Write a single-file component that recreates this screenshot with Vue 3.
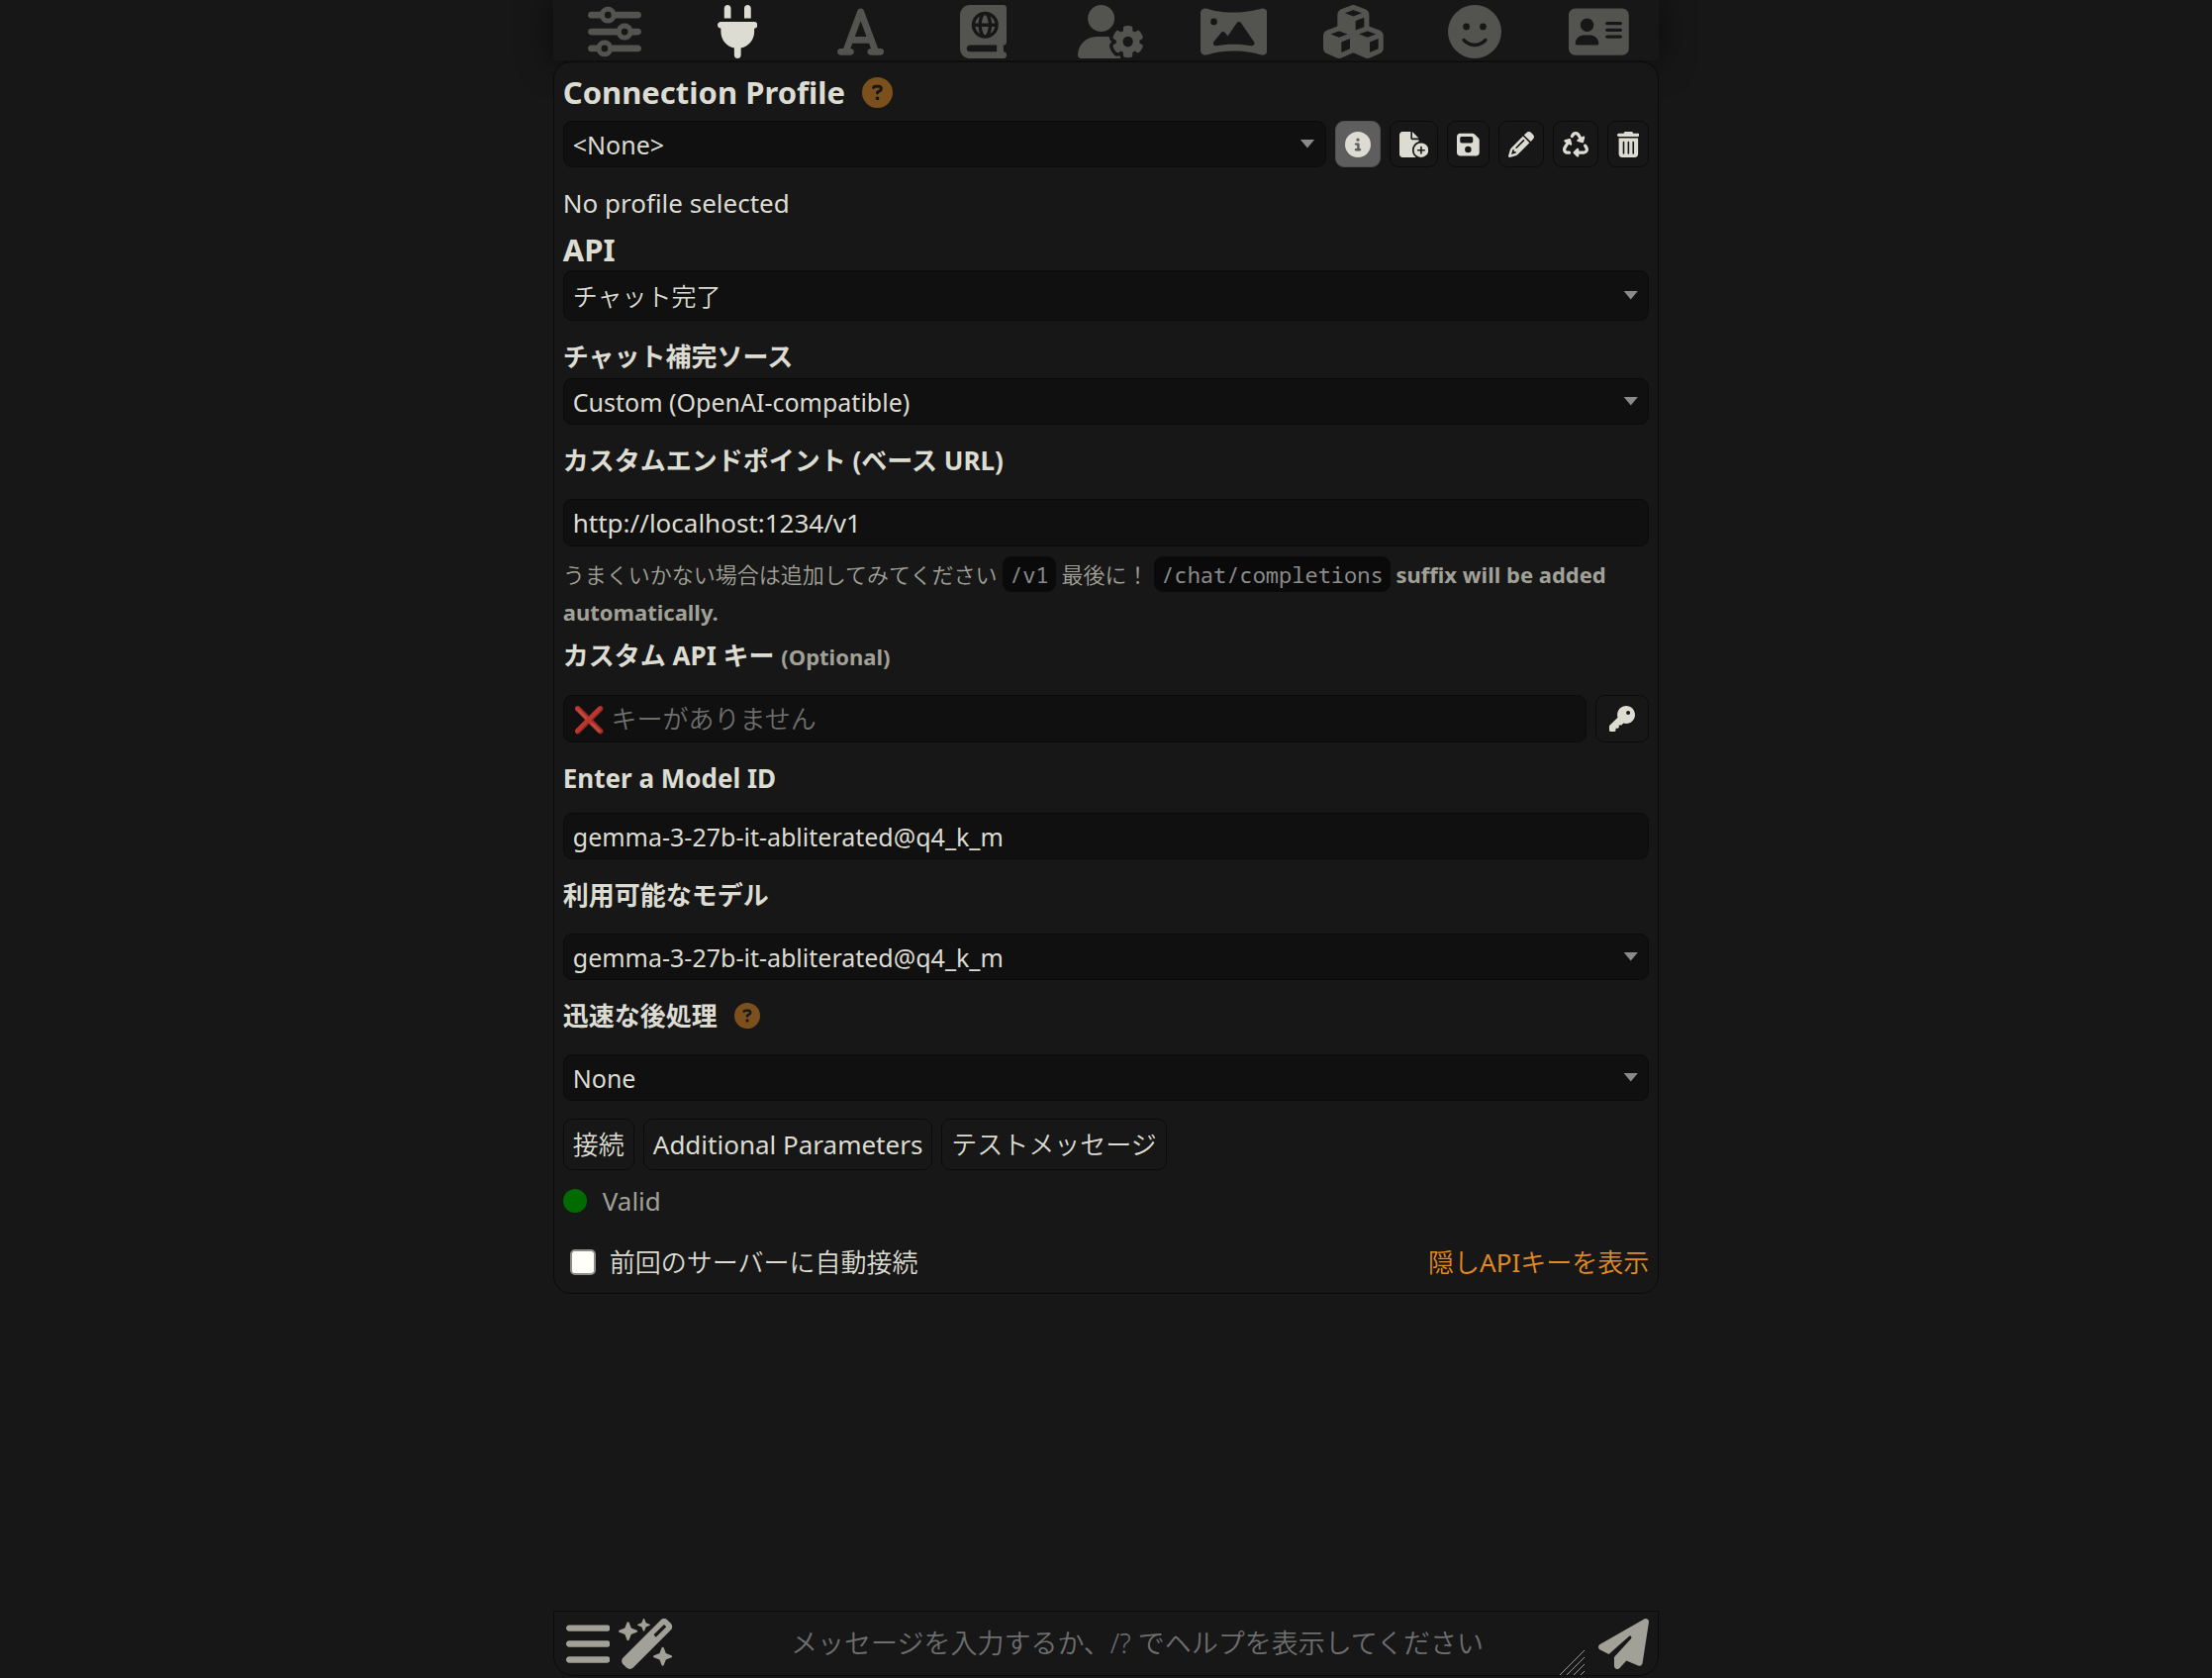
<script setup>
import { ref } from 'vue'

const icons = {
  sliders: [512, 'M0 416c0 17.7 14.3 32 32 32l54.7 0c12.3 28.3 40.5 48 73.3 48s61-19.7 73.3-48L480 448c17.7 0 32-14.3 32-32s-14.3-32-32-32l-246.7 0c-12.3-28.3-40.5-48-73.3-48s-61 19.7-73.3 48L32 384c-17.7 0-32 14.3-32 32zm128 0a32 32 0 1 1 64 0 32 32 0 1 1 -64 0zM320 256a32 32 0 1 1 64 0 32 32 0 1 1 -64 0zm32-80c-32.8 0-61 19.7-73.3 48L32 224c-17.7 0-32 14.3-32 32s14.3 32 32 32l246.7 0c12.3 28.3 40.5 48 73.3 48s61-19.7 73.3-48l54.7 0c17.7 0 32-14.3 32-32s-14.3-32-32-32l-54.7 0c-12.3-28.3-40.5-48-73.3-48zM192 128a32 32 0 1 1 0-64 32 32 0 1 1 0 64zm73.3-64C253 35.7 224.8 16 192 16s-61 19.7-73.3 48L32 64C14.3 64 0 78.3 0 96s14.3 32 32 32l86.7 0c12.3 28.3 40.5 48 73.3 48s61-19.7 73.3-48L480 128c17.7 0 32-14.3 32-32s-14.3-32-32-32L265.3 64z'],
  plug: [384, 'M96 0C78.3 0 64 14.3 64 32l0 96 64 0 0-96c0-17.7-14.3-32-32-32zM288 0c-17.7 0-32 14.3-32 32l0 96 64 0 0-96c0-17.7-14.3-32-32-32zM32 160c-17.7 0-32 14.3-32 32s14.3 32 32 32l0 32c0 77.4 55 142 128 156.8l0 67.2c0 17.7 14.3 32 32 32s32-14.3 32-32l0-67.2C297 398 352 333.4 352 256l0-32c17.7 0 32-14.3 32-32s-14.3-32-32-32L32 160z'],
  font: [448, 'M254 52.8C249.3 40.3 237.3 32 224 32s-25.3 8.3-30 20.8L57.8 416 32 416c-17.7 0-32 14.3-32 32s14.3 32 32 32l96 0c17.7 0 32-14.3 32-32s-14.3-32-32-32l-1.8 0 18-48 159.6 0 18 48-1.8 0c-17.7 0-32 14.3-32 32s14.3 32 32 32l96 0c17.7 0 32-14.3 32-32s-14.3-32-32-32l-25.8 0L254 52.8zM279.8 304l-111.6 0L224 155.1 279.8 304z'],
  atlas: [448, 'M0 96C0 43 43 0 96 0L384 0l32 0c17.7 0 32 14.3 32 32l0 320c0 17.7-14.3 32-32 32l0 64c17.7 0 32 14.3 32 32s-14.3 32-32 32l-32 0L96 512c-53 0-96-43-96-96L0 96zM64 416c0 17.7 14.3 32 32 32l256 0 0-64L96 384c-17.7 0-32 14.3-32 32zM247.4 283.8c-3.7 3.7-6.2 4.2-7.4 4.2s-3.7-.5-7.4-4.2c-3.8-3.7-8-10-11.8-18.9c-6.2-14.5-10.8-34.3-12.2-56.9l63 0c-1.5 22.6-6 42.4-12.2 56.9c-3.8 8.9-8 15.2-11.8 18.9zm42.7-9.9c7.3-18.3 12-41.1 13.4-65.9l31.1 0c-4.7 27.9-21.4 51.7-44.5 65.9zm0-163.8c23.2 14.2 39.9 38 44.5 65.9l-31.1 0c-1.4-24.7-6.1-47.5-13.4-65.9zM368 192a128 128 0 1 0 -256 0 128 128 0 1 0 256 0zM145.3 208l31.1 0c1.4 24.7 6.1 47.5 13.4 65.9c-23.2-14.2-39.9-38-44.5-65.9zm31.1-32l-31.1 0c4.7-27.9 21.4-51.7 44.5-65.9c-7.3 18.3-12 41.1-13.4 65.9zm56.1-75.8c3.7-3.7 6.2-4.2 7.4-4.2s3.7 .5 7.4 4.2c3.8 3.7 8 10 11.8 18.9c6.2 14.5 10.8 34.3 12.2 56.9l-63 0c1.5-22.6 6-42.4 12.2-56.9c3.8-8.9 8-15.2 11.8-18.9z'],
  userGear: [640, 'M224 0a128 128 0 1 1 0 256A128 128 0 1 1 224 0zM178.3 304l91.4 0c11.8 0 23.4 1.2 34.5 3.3c-2.1 18.5 7.4 35.6 21.8 44.8c-16.6 10.6-26.7 31.6-20 53.3c4 12.9 9.4 25.5 16.4 37.6s15.2 23.1 24.4 33c15.7 16.9 39.6 18.4 57.2 8.7l0 .9c0 9.2 2.7 18.5 7.9 26.3L29.7 512C13.3 512 0 498.7 0 482.3C0 383.8 79.8 304 178.3 304zM436 218.2c0-7 4.5-13.3 11.3-14.8c10.5-2.4 21.5-3.7 32.7-3.7s22.2 1.3 32.7 3.7c6.8 1.5 11.3 7.8 11.3 14.8l0 30.6c7.9 3.4 15.4 7.7 22.3 12.8l24.9-14.3c6.1-3.5 13.7-2.7 18.5 2.4c7.6 8.1 14.3 17.2 20.1 27.2s10.3 20.4 13.5 31c2.1 6.7-1.1 13.7-7.2 17.2l-25 14.4c.4 4 .7 8.1 .7 12.3s-.2 8.2-.7 12.3l25 14.4c6.1 3.5 9.2 10.5 7.2 17.2c-3.3 10.6-7.8 21-13.5 31s-12.5 19.1-20.1 27.2c-4.8 5.1-12.5 5.9-18.5 2.4l-24.9-14.3c-6.9 5.1-14.3 9.4-22.3 12.8l0 30.6c0 7-4.5 13.3-11.3 14.8c-10.5 2.4-21.5 3.7-32.7 3.7s-22.2-1.3-32.7-3.7c-6.8-1.5-11.3-7.8-11.3-14.8l0-30.5c-8-3.4-15.6-7.7-22.5-12.9l-24.7 14.3c-6.1 3.5-13.7 2.7-18.5-2.4c-7.6-8.1-14.3-17.2-20.1-27.2s-10.3-20.4-13.5-31c-2.1-6.7 1.1-13.7 7.2-17.2l24.8-14.3c-.4-4.1-.7-8.2-.7-12.4s.2-8.3 .7-12.4L343.8 325c-6.1-3.5-9.2-10.5-7.2-17.2c3.3-10.6 7.7-21 13.5-31s12.5-19.1 20.1-27.2c4.8-5.1 12.4-5.9 18.5-2.4l24.8 14.3c6.9-5.1 14.5-9.4 22.5-12.9l0-30.5zm92.1 133.5a48.1 48.1 0 1 0 -96.1 0 48.1 48.1 0 1 0 96.1 0z'],
  panorama: [640, 'M45.6 32C20.4 32 0 52.4 0 77.6L0 434.4C0 459.6 20.4 480 45.6 480c5.1 0 10-.8 14.7-2.4C74.6 472.8 177.6 440 320 440s245.4 32.8 259.6 37.6c4.7 1.6 9.7 2.4 14.7 2.4c25.2 0 45.6-20.4 45.6-45.6l0-356.7C640 52.4 619.6 32 594.4 32c-5 0-10 .8-14.7 2.4C565.4 39.2 462.4 72 320 72S74.6 39.2 60.4 34.4C55.6 32.8 50.7 32 45.6 32zM96 160a32 32 0 1 1 64 0 32 32 0 1 1 -64 0zm272 0c7.9 0 15.4 3.9 19.8 10.5L512.3 353c5.4 8 5.6 18.4 .4 26.5s-14.7 12.3-24.2 10.7C442.7 382.4 385.2 376 320 376c-65.6 0-123.4 6.5-169.3 14.4c-9.8 1.7-19.7-2.9-24.7-11.5s-4.3-19.4 1.9-27.2L197.3 265c4.6-5.7 11.4-9 18.7-9s14.2 3.3 18.7 9l26.4 33.1 87-127.6c4.5-6.6 11.9-10.5 19.8-10.5z'],
  cubes: [576, 'M290.8 48.6l78.4 29.7L288 109.5 206.8 78.3l78.4-29.7c1.8-.7 3.8-.7 5.7 0zM136 92.5l0 112.2c-1.3 .4-2.6 .8-3.9 1.3l-96 36.4C14.4 250.6 0 271.5 0 294.7L0 413.9c0 22.2 13.1 42.3 33.5 51.3l96 42.2c14.4 6.3 30.7 6.3 45.1 0L288 457.5l113.5 49.9c14.4 6.3 30.7 6.3 45.1 0l96-42.2c20.3-8.9 33.5-29.1 33.5-51.3l0-119.1c0-23.3-14.4-44.1-36.1-52.4l-96-36.4c-1.3-.5-2.6-.9-3.9-1.3l0-112.2c0-23.3-14.4-44.1-36.1-52.4l-96-36.4c-12.8-4.8-26.9-4.8-39.7 0l-96 36.4C150.4 48.4 136 69.3 136 92.5zM392 210.6l-82.4 31.2 0-89.2L392 121l0 89.6zM154.8 250.9l78.4 29.7L152 311.7 70.8 280.6l78.4-29.7c1.8-.7 3.8-.7 5.7 0zm18.8 204.4l0-100.5L256 323.2l0 95.9-82.4 36.2zM421.2 250.9c1.8-.7 3.8-.7 5.7 0l78.4 29.7L424 311.7l-81.2-31.1 78.4-29.7zM523.2 421.2l-77.6 34.1 0-100.5L528 323.2l0 90.7c0 3.2-1.9 6-4.8 7.3z'],
  smile: [512, 'M256 512A256 256 0 1 0 256 0a256 256 0 1 0 0 512zM164.1 325.5C182 346.2 212.6 368 256 368s74-21.8 91.9-42.5c5.8-6.7 15.9-7.4 22.6-1.6s7.4 15.9 1.6 22.6C349.8 372.1 311.1 400 256 400s-93.8-27.9-116.1-53.5c-5.8-6.7-5.1-16.8 1.6-22.6s16.8-5.1 22.6 1.6zM144.4 208a32 32 0 1 1 64 0 32 32 0 1 1 -64 0zm192-32a32 32 0 1 1 0 64 32 32 0 1 1 0-64z'],
  card: [576, 'M64 32C28.7 32 0 60.7 0 96L0 416c0 35.3 28.7 64 64 64l448 0c35.3 0 64-28.7 64-64l0-320c0-35.3-28.7-64-64-64L64 32zm80 256l64 0c44.2 0 80 35.8 80 80c0 8.8-7.2 16-16 16L80 384c-8.8 0-16-7.2-16-16c0-44.2 35.8-80 80-80zm-32-96a64 64 0 1 1 128 0 64 64 0 1 1 -128 0zm256-32l128 0c8.8 0 16 7.2 16 16s-7.2 16-16 16l-128 0c-8.8 0-16-7.2-16-16s7.2-16 16-16zm0 64l128 0c8.8 0 16 7.2 16 16s-7.2 16-16 16l-128 0c-8.8 0-16-7.2-16-16s7.2-16 16-16zm0 64l128 0c8.8 0 16 7.2 16 16s-7.2 16-16 16l-128 0c-8.8 0-16-7.2-16-16s7.2-16 16-16z'],
  question: [512, 'M256 512A256 256 0 1 0 256 0a256 256 0 1 0 0 512zM169.8 165.3c7.9-22.3 29.1-37.3 52.8-37.3l58.3 0c34.9 0 63.1 28.3 63.1 63.1c0 22.6-12.1 43.5-31.7 54.8L280 264.4c-.2 13-10.9 23.6-24 23.6c-13.3 0-24-10.7-24-24l0-13.5c0-8.6 4.6-16.5 12.1-20.8l44.3-25.4c4.7-2.7 7.6-7.7 7.6-13.1c0-8.4-6.8-15.1-15.1-15.1l-58.3 0c-3.4 0-6.4 2.1-7.5 5.3l-.4 1.2c-4.4 12.5-18.2 19-30.6 14.6s-19-18.2-14.6-30.6l.4-1.2zM224 352a32 32 0 1 1 64 0 32 32 0 1 1 -64 0z'],
  info: [512, 'M256 512A256 256 0 1 0 256 0a256 256 0 1 0 0 512zM216 336l24 0 0-64-24 0c-13.3 0-24-10.7-24-24s10.7-24 24-24l48 0c13.3 0 24 10.7 24 24l0 88 8 0c13.3 0 24 10.7 24 24s-10.7 24-24 24l-80 0c-13.3 0-24-10.7-24-24s10.7-24 24-24zm40-208a32 32 0 1 1 0 64 32 32 0 1 1 0-64z'],
  filePlus: [576, 'M0 64C0 28.7 28.7 0 64 0L224 0l0 128c0 17.7 14.3 32 32 32l128 0 0 38.6C310.1 219.5 256 287.4 256 368c0 59.1 29.1 111.3 73.7 143.3c-3.2 .5-6.4 .7-9.7 .7L64 512c-35.3 0-64-28.7-64-64L0 64zm384 64l-128 0L256 0 384 128zm48 96a144 144 0 1 1 0 288 144 144 0 1 1 0-288zm16 80c0-8.8-7.2-16-16-16s-16 7.2-16 16l0 48-48 0c-8.8 0-16 7.2-16 16s7.2 16 16 16l48 0 0 48c0 8.8 7.2 16 16 16s16-7.2 16-16l0-48 48 0c8.8 0 16-7.2 16-16s-7.2-16-16-16l-48 0 0-48z'],
  floppy: [448, 'M64 32C28.7 32 0 60.7 0 96L0 416c0 35.3 28.7 64 64 64l320 0c35.3 0 64-28.7 64-64l0-242.7c0-17-6.7-33.3-18.7-45.3L352 50.7C340 38.7 323.7 32 306.7 32L64 32zm0 96c0-17.7 14.3-32 32-32l192 0c17.7 0 32 14.3 32 32l0 64c0 17.7-14.3 32-32 32L96 224c-17.7 0-32-14.3-32-32l0-64zM224 288a64 64 0 1 1 0 128 64 64 0 1 1 0-128z'],
  pencil: [512, 'M410.3 231l11.3-11.3-33.9-33.9-62.1-62.1L291.7 89.8l-11.3 11.3-22.6 22.6L58.6 322.9c-10.4 10.4-18 23.3-22.2 37.4L1 480.7c-2.5 8.4-.2 17.5 6.1 23.7s15.3 8.5 23.7 6.1l120.3-35.4c14.1-4.2 27-11.8 37.4-22.2L387.7 253.7 410.3 231zM160 399.4l-9.1 22.7c-4 3.1-8.5 5.4-13.3 6.9L59.4 452l23-78.1c1.4-4.9 3.8-9.4 6.9-13.3l22.7-9.1 0 32c0 8.8 7.2 16 16 16l32 0zM362.7 18.7L348.3 33.2 325.7 55.8 314.3 67.1l33.9 33.9 62.1 62.1 33.9 33.9 11.3-11.3 22.6-22.6 14.5-14.5c25-25 25-65.5 0-90.5L453.3 18.7c-25-25-65.5-25-90.5 0zm-47.4 168l-144 144c-6.2 6.2-16.4 6.2-22.6 0s-6.2-16.4 0-22.6l144-144c6.2-6.2 16.4-6.2 22.6 0s6.2 16.4 0 22.6z'],
  recycle: [512, 'M174.7 45.1C192.2 17 223 0 256 0s63.8 17 81.3 45.1l38.6 61.7 27-15.6c8.4-4.9 18.9-4.2 26.6 1.7s11.1 15.9 8.6 25.3l-23.4 87.4c-3.4 12.8-16.6 20.4-29.4 17l-87.4-23.4c-9.4-2.5-16.3-10.4-17.6-20s3.4-19.1 11.8-23.9l28.4-16.4L283 79c-5.8-9.3-16-15-27-15s-21.2 5.7-27 15l-17.5 28c-9.2 14.8-28.6 19.5-43.6 10.5c-15.3-9.2-20.2-29.2-10.7-44.4l17.5-28zM429.5 251.9c15-9 34.4-4.3 43.6 10.5l24.4 39.1c9.4 15.1 14.4 32.4 14.6 50.2c.3 53.1-42.7 96.4-95.8 96.4L320 448l0 32c0 9.7-5.8 18.5-14.8 22.2s-19.3 1.7-26.2-5.2l-64-64c-9.4-9.4-9.4-24.6 0-33.9l64-64c6.9-6.9 17.2-8.9 26.2-5.2s14.8 12.5 14.8 22.2l0 32 96.2 0c17.6 0 31.9-14.4 31.8-32c0-5.9-1.7-11.7-4.8-16.7l-24.4-39.1c-9.5-15.2-4.7-35.2 10.7-44.4zm-364.6-31L36 204.2c-8.4-4.9-13.1-14.3-11.8-23.9s8.2-17.5 17.6-20l87.4-23.4c12.8-3.4 26 4.2 29.4 17L182 241.2c2.5 9.4-.9 19.3-8.6 25.3s-18.2 6.6-26.6 1.7l-26.5-15.3L68.8 335.3c-3.1 5-4.8 10.8-4.8 16.7c-.1 17.6 14.2 32 31.8 32l32.2 0c17.7 0 32 14.3 32 32s-14.3 32-32 32l-32.2 0C42.7 448-.3 404.8 0 351.6c.1-17.8 5.1-35.1 14.6-50.2l50.3-80.5z'],
  trash: [448, 'M135.2 17.7C140.6 6.8 151.7 0 163.8 0L284.2 0c12.1 0 23.2 6.8 28.6 17.7L320 32l96 0c17.7 0 32 14.3 32 32s-14.3 32-32 32L32 96C14.3 96 0 81.7 0 64S14.3 32 32 32l96 0 7.2-14.3zM32 128l384 0 0 320c0 35.3-28.7 64-64 64L96 512c-35.3 0-64-28.7-64-64l0-320zm96 64c-8.8 0-16 7.2-16 16l0 224c0 8.8 7.2 16 16 16s16-7.2 16-16l0-224c0-8.8-7.2-16-16-16zm96 0c-8.8 0-16 7.2-16 16l0 224c0 8.8 7.2 16 16 16s16-7.2 16-16l0-224c0-8.8-7.2-16-16-16zm96 0c-8.8 0-16 7.2-16 16l0 224c0 8.8 7.2 16 16 16s16-7.2 16-16l0-224c0-8.8-7.2-16-16-16z'],
  key: [512, 'M336 352c97.2 0 176-78.8 176-176S433.2 0 336 0S160 78.8 160 176c0 18.7 2.9 36.8 8.3 53.7L7 391c-4.5 4.5-7 10.6-7 17l0 80c0 13.3 10.7 24 24 24l80 0c13.3 0 24-10.7 24-24l0-40 40 0c13.3 0 24-10.7 24-24l0-40 40 0c6.4 0 12.5-2.5 17-7l33.3-33.3c16.9 5.4 35 8.3 53.7 8.3zM376 96a40 40 0 1 1 0 80 40 40 0 1 1 0-80z'],
  bars: [448, 'M0 96C0 78.3 14.3 64 32 64l384 0c17.7 0 32 14.3 32 32s-14.3 32-32 32L32 128C14.3 128 0 113.7 0 96zM0 256c0-17.7 14.3-32 32-32l384 0c17.7 0 32 14.3 32 32s-14.3 32-32 32L32 288c-17.7 0-32-14.3-32-32zM448 416c0 17.7-14.3 32-32 32L32 448c-17.7 0-32-14.3-32-32s14.3-32 32-32l384 0c17.7 0 32 14.3 32 32z'],
  wand: [576, 'M234.7 42.7L197 56.8c-3 1.1-5 4-5 7.2s2 6.1 5 7.2l37.7 14.1L248.8 123c1.1 3 4 5 7.2 5s6.1-2 7.2-5l14.1-37.7L315 71.2c3-1.1 5-4 5-7.2s-2-6.1-5-7.2L277.3 42.7 263.2 5c-1.1-3-4-5-7.2-5s-6.1 2-7.2 5L234.7 42.7zM46.1 395.4c-18.7 18.7-18.7 49.1 0 67.9l34.6 34.6c18.7 18.7 49.1 18.7 67.9 0L529.9 116.5c18.7-18.7 18.7-49.1 0-67.9L495.3 14.1c-18.7-18.7-49.1-18.7-67.9 0L46.1 395.4zM484.6 82.6l-105 105-23.3-23.3 105-105 23.3 23.3zM7.5 117.2C3 118.9 0 123.2 0 128s3 9.1 7.5 10.8L64 160l21.2 56.5c1.7 4.5 6 7.5 10.8 7.5s9.1-3 10.8-7.5L128 160l56.5-21.2c4.5-1.7 7.5-6 7.5-10.8s-3-9.1-7.5-10.8L128 96 106.8 39.5C105.1 35 100.8 32 96 32s-9.1 3-10.8 7.5L64 96 7.5 117.2zm352 256c-4.5 1.7-7.5 6-7.5 10.8s3 9.1 7.5 10.8L416 416l21.2 56.5c1.7 4.5 6 7.5 10.8 7.5s9.1-3 10.8-7.5L480 416l56.5-21.2c4.5-1.7 7.5-6 7.5-10.8s-3-9.1-7.5-10.8L480 352l-21.2-56.5c-1.7-4.5-6-7.5-10.8-7.5s-9.1 3-10.8 7.5L416 352l-56.5 21.2z'],
  plane: [512, 'M498.1 5.6c10.1 7 15.4 19.1 13.5 31.2l-64 416c-1.5 9.7-7.4 18.2-16 23s-18.9 5.4-28 1.6L284 427.7l-68.5 74.1c-8.9 9.7-22.9 12.9-35.2 8.1S160 493.2 160 480l0-83.6c0-4 1.5-7.8 4.2-10.8L331.8 202.8c5.8-6.3 5.6-16-.4-22s-15.7-6.4-22-.7L106 360.8 17.7 316.6C7.1 311.3 .3 300.7 0 288.9s5.9-22.8 16.1-28.7l448-256c10.7-6.1 23.9-5.5 34 1.4z'],
}

const Icon = (props) => {
  const [w, d] = icons[props.name]
  return h('svg', { viewBox: `0 0 ${w} 512`, 'aria-hidden': 'true' }, [h('path', { d, 'fill-rule': 'evenodd' })])
}
Icon.props = ['name']

const drawers = [
  { icon: 'sliders', title: 'AI Response Configuration' },
  { icon: 'plug', title: 'API Connections', open: true },
  { icon: 'font', title: 'Advanced Formatting' },
  { icon: 'atlas', title: 'World Info' },
  { icon: 'userGear', title: 'User Settings' },
  { icon: 'panorama', title: 'Backgrounds' },
  { icon: 'cubes', title: 'Extensions' },
  { icon: 'smile', title: 'Persona Management' },
  { icon: 'card', title: 'Character Management' },
]

const profileActions = [
  { icon: 'info', title: 'View details', on: true },
  { icon: 'filePlus', title: 'Create profile' },
  { icon: 'floppy', title: 'Update profile' },
  { icon: 'pencil', title: 'Edit profile' },
  { icon: 'recycle', title: 'Reload profile' },
  { icon: 'trash', title: 'Delete profile' },
]

const endpoint = ref('http://localhost:1234/v1')
const model = ref('gemma-3-27b-it-abliterated@q4_k_m')
const apiKey = ref('')
const autoConnect = ref(false)
const message = ref('')
</script>

<script>
import { h } from 'vue'
</script>

<template>
  <div class="page">
    <nav class="topbar">
      <div v-for="d in drawers" :key="d.icon" class="cell">
        <button type="button" class="drawer" :class="{ open: d.open }" :aria-label="d.title">
          <Icon :name="d.icon" class="icon" />
        </button>
      </div>
    </nav>

    <main class="panel">
      <h3 class="title">
        <label for="profile">Connection Profile</label>
        <a href="#" class="help" aria-label="Help"><Icon name="question" class="icon" /></a>
      </h3>
      <div class="row first">
        <div class="select">
          <select id="profile"><option>&lt;None&gt;</option></select>
        </div>
        <button v-for="a in profileActions" :key="a.icon" type="button" class="btn" :class="{ on: a.on }" :aria-label="a.title">
          <Icon :name="a.icon" class="icon" />
        </button>
      </div>
      <p class="details">No profile selected</p>

      <h3 class="title"><label for="api">API</label></h3>
      <div class="select tall">
        <select id="api" class="ja"><option>チャット完了</option></select>
      </div>

      <h4 class="label tight"><label for="source">チャット補完ソース</label></h4>
      <div class="select">
        <select id="source"><option>Custom (OpenAI-compatible)</option></select>
      </div>

      <h4 class="label"><label for="endpoint">カスタムエンドポイント (ベース URL)</label></h4>
      <input id="endpoint" v-model="endpoint" class="field large" type="text">
      <p class="hint">
        <span class="ja">うまくいかない場合は追加してみてください</span> <code>/v1</code> <span class="ja">最後に！</span> <code>/chat/completions</code> <b>suffix will be added automatically.</b>
      </p>

      <h4 class="label after-hint"><label for="key">カスタム API キー <small>(Optional)</small></label></h4>
      <div class="row">
        <input id="key" v-model="apiKey" class="field large ja" type="text" placeholder="❌ キーがありません">
        <button type="button" class="btn key" aria-label="API keys"><Icon name="key" class="icon" /></button>
      </div>

      <h4 class="label near"><label for="model">Enter a Model ID</label></h4>
      <input id="model" v-model="model" class="field" type="text">

      <h4 class="label"><label for="models">利用可能なモデル</label></h4>
      <div class="select">
        <select id="models"><option>gemma-3-27b-it-abliterated@q4_k_m</option></select>
      </div>

      <h4 class="label">
        <label for="post">迅速な後処理</label>
        <a href="#" class="help" aria-label="Help"><Icon name="question" class="icon" /></a>
      </h4>
      <div class="select">
        <select id="post"><option>None</option></select>
      </div>

      <div class="row actions">
        <button type="button" class="btn ja">接続</button>
        <button type="button" class="btn">Additional Parameters</button>
        <button type="button" class="btn ja">テストメッセージ</button>
      </div>

      <div class="status"><span class="dot"></span>Valid</div>

      <div class="footer">
        <label class="auto ja"><input v-model="autoConnect" type="checkbox">前回のサーバーに自動接続</label>
        <a href="#" class="link ja">隠し<span class="latin">API</span>キーを表示</a>
      </div>
    </main>

    <form class="send" @submit.prevent>
      <button type="button" class="tool" aria-label="Options"><Icon name="bars" class="icon" /></button>
      <button type="button" class="tool" aria-label="Extensions"><Icon name="wand" class="icon" /></button>
      <div class="message">
        <textarea v-model="message" rows="1" aria-label="Message" placeholder="メッセージを入力するか、/? でヘルプを表示してください"></textarea>
        <svg class="grip" viewBox="0 0 26 26" aria-hidden="true">
          <path d="M1 26L26 1M8 26L26 8M15 26L26 15M22 26L26 22" />
        </svg>
      </div>
      <button type="submit" class="tool" aria-label="Send"><Icon name="plane" class="icon" /></button>
    </form>
  </div>
</template>

<style>
html, body {
  background: #171717;
}
</style>

<style scoped>
.page {
  --text: #dcdcd2;
  --muted: #a1a197;
  --line: #0b0b0b;
  --accent: #e18a24;
  display: flex;
  flex-direction: column;
  width: 50%;
  min-width: 900px;
  min-height: 100vh;
  margin: 0 auto;
  padding-bottom: 2px;
  box-sizing: border-box;
  color: var(--text);
  font: 26px/36px "Noto Sans", "Noto Sans CJK JP", sans-serif;
}
.page * { box-sizing: border-box; }
button, input, select, textarea { font: inherit; color: inherit; }
button { cursor: pointer; }
h3, h4, p { margin: 0; }
.icon { display: block; height: 26px; width: auto; flex: none; fill: currentColor; }
.ja { font-weight: 350; }
.latin { font-weight: 400; }

.topbar {
  display: flex;
  height: 61px;
  margin-bottom: 1px;
  background: #171717;
  box-shadow: 0 0 35px rgba(0, 0, 0, 0.6);
}
.cell { flex: 1; display: flex; justify-content: center; align-items: center; padding-top: 3px; }
.drawer {
  display: flex;
  justify-content: safe center;
  width: 58px;
  padding: 0;
  border: 0;
  background: none;
  opacity: 0.3;
}
.drawer.open { opacity: 1; }
.drawer .icon { height: 54px; }

.panel {
  position: relative;
  padding: 9px 9px 13px;
  border: 1px solid var(--line);
  border-radius: 18px;
  background: #171717;
}
.title {
  display: flex;
  align-items: center;
  gap: 17px;
  font-size: 31px;
  line-height: 42px;
}
.title .icon { height: 31px; }
.help { color: var(--accent); opacity: 0.5; }
.row { display: flex; gap: 9px; }
.row.first { margin-top: 8px; }

.select { position: relative; flex: 1; height: 47px; }
.select.tall { height: 51px; }
.select::after {
  content: "";
  position: absolute;
  right: 11px;
  top: calc(50% - 5px);
  width: 15px;
  height: 9px;
  background: #8a8a8a;
  clip-path: polygon(0 0, 100% 0, 50% 100%);
  pointer-events: none;
}
select, .field {
  display: block;
  width: 100%;
  height: 47px;
  padding: 0 9px;
  border: 1px solid var(--line);
  border-radius: 9px;
  background: #101010;
  font-size: 25px;
  appearance: none;
}
.field.large { height: 48px; font-size: 26px; }
.select select { height: 100%; }
.row .field { flex: 1; width: auto; }
.field::placeholder { color: rgba(142, 142, 142, 0.75); opacity: 1; }

.btn {
  display: flex;
  align-items: center;
  justify-content: center;
  height: 47px;
  padding: 0 9px;
  border: 1px solid var(--line);
  border-radius: 9px;
  background: #171717;
  white-space: nowrap;
}
.btn.on { background: #5e5e5e; border-color: #515151; }
.btn.key { width: 54px; height: 48px; }

.details { margin: 18px 0 8px; }
.label {
  display: flex;
  align-items: center;
  gap: 17px;
  margin: 18px 0 21px;
  font-size: 26px;
}
.label.tight { margin-bottom: 4px; }
.label.after-hint { margin-top: 7px; }
.label.near { margin-bottom: 17px; }
.label small { font-size: 22px; color: var(--muted); }
.hint {
  margin-top: 9px;
  font-size: 22px;
  line-height: 38px;
  color: var(--muted);
}
.hint code {
  padding: 3px 7px;
  border-radius: 9px;
  background: #0a0a0a;
  color: #8b8b8b;
  font: 22px/26px "Noto Sans Mono", "DejaVu Sans Mono", monospace;
}

.actions { margin-top: 18px; }
.actions .btn { height: 52px; padding: 0 9px; }
.status {
  display: flex;
  align-items: center;
  gap: 16px;
  margin-top: 13px;
  color: var(--muted);
}
.dot { width: 24px; height: 24px; border-radius: 50%; background: #006c00; }
.footer { display: flex; justify-content: space-between; margin-top: 26px; }
.auto { display: flex; align-items: center; gap: 14px; }
.auto input {
  appearance: none;
  width: 26px;
  height: 26px;
  margin: 0 0 0 7px;
  border: 2px solid #8d8d88;
  border-radius: 5px;
  background: #fffff8;
}
.link { color: var(--accent); text-decoration: none; }

.send {
  display: flex;
  align-items: center;
  gap: 9px;
  height: 66px;
  margin-top: auto;
  padding: 0 9px 0 12px;
  border: 1px solid var(--line);
  border-radius: 0 0 20px 20px;
}
.tool { padding: 0; border: 0; background: none; color: var(--muted); }
.tool .icon { height: 51px; }
.message { position: relative; flex: 1; height: 100%; }
.message textarea {
  display: block;
  width: 100%;
  height: 100%;
  padding: 14px 0;
  border: 0;
  outline: 0;
  background: none;
  resize: none;
  overflow: hidden;
  text-align: center;
  font-size: 27px;
  font-weight: 350;
}
.message textarea::placeholder { color: #6e6e6e; opacity: 1; }
.grip {
  position: absolute;
  right: 5px;
  bottom: 0;
  width: 26px;
  height: 26px;
  fill: none;
  stroke: #9a9a9a;
  stroke-width: 1;
}
</style>
